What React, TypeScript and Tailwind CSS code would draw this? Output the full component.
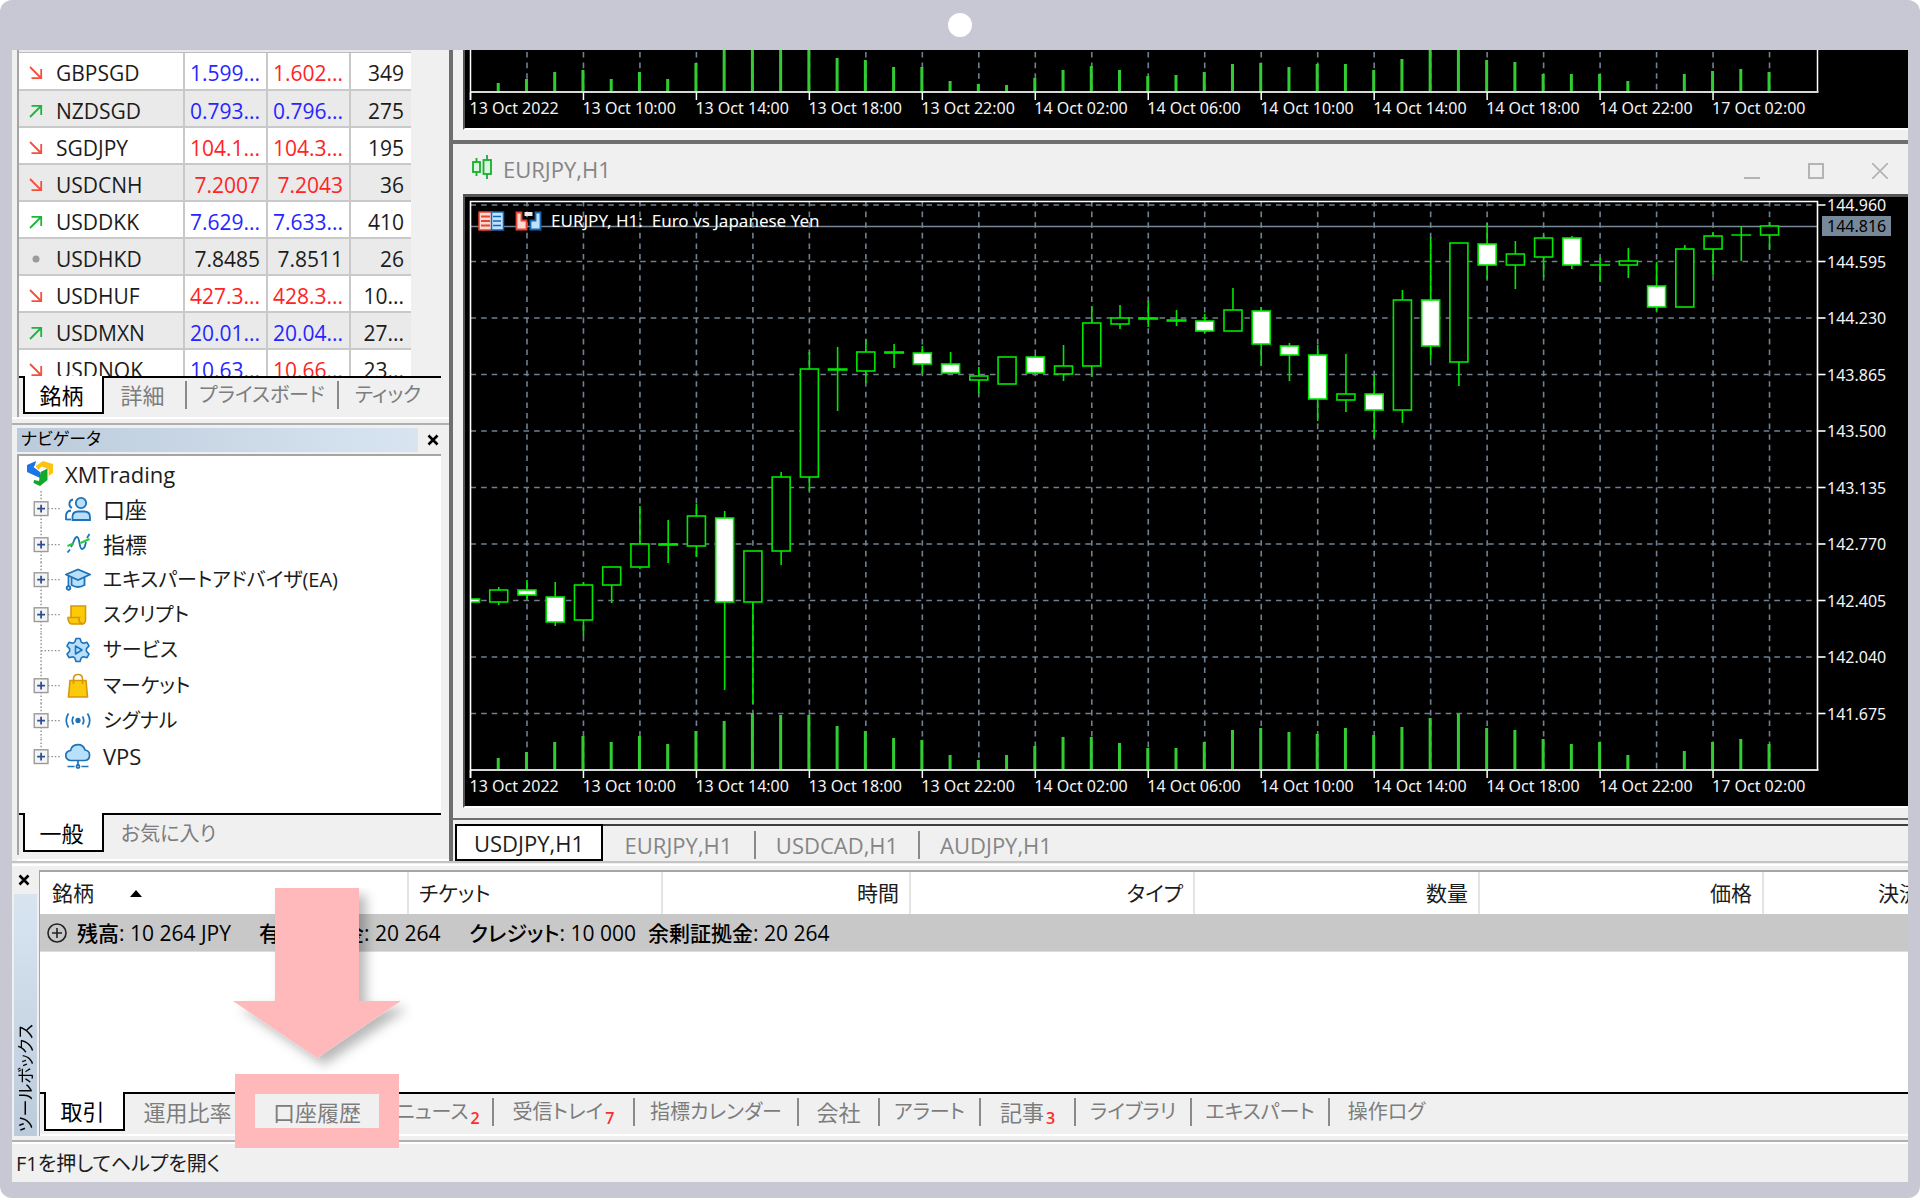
import React from 'react';

const FONT = "font-['Open_Sans','Noto_Sans_CJK_JP',sans-serif] [font-feature-settings:'palt']";

type Direction = 'up' | 'down' | 'flat';

interface Quote {
  symbol: string;
  direction: Direction;
  bid: string;
  ask: string;
  spread: string;
  bidColor: string;
  askColor: string;
}

const RED = 'text-[#ff2424]';
const BLUE = 'text-[#2626ff]';
const DARK = 'text-[#1c1c1c]';

const quotes: Quote[] = [
  { symbol: 'GBPSGD', direction: 'down', bid: '1.599...', ask: '1.602...', spread: '349', bidColor: BLUE, askColor: RED },
  { symbol: 'NZDSGD', direction: 'up', bid: '0.793...', ask: '0.796...', spread: '275', bidColor: BLUE, askColor: BLUE },
  { symbol: 'SGDJPY', direction: 'down', bid: '104.1...', ask: '104.3...', spread: '195', bidColor: RED, askColor: RED },
  { symbol: 'USDCNH', direction: 'down', bid: '7.2007', ask: '7.2043', spread: '36', bidColor: RED, askColor: RED },
  { symbol: 'USDDKK', direction: 'up', bid: '7.629...', ask: '7.633...', spread: '410', bidColor: BLUE, askColor: BLUE },
  { symbol: 'USDHKD', direction: 'flat', bid: '7.8485', ask: '7.8511', spread: '26', bidColor: DARK, askColor: DARK },
  { symbol: 'USDHUF', direction: 'down', bid: '427.3...', ask: '428.3...', spread: '10...', bidColor: RED, askColor: RED },
  { symbol: 'USDMXN', direction: 'up', bid: '20.01...', ask: '20.04...', spread: '27...', bidColor: BLUE, askColor: BLUE },
  { symbol: 'USDNOK', direction: 'down', bid: '10.63...', ask: '10.66...', spread: '23...', bidColor: BLUE, askColor: RED },
];

// [high, body top, body bottom, low, filled]
type Candle = [number, number, number, number, 0 | 1];

const candles: Candle[] = [
  [599, 599, 602, 602, 1], [587, 590, 602, 605, 0], [580, 590, 595, 600, 1], [582, 597, 622, 626, 1],
  [582, 585, 620, 636, 0], [567, 567, 585, 603, 0], [506, 544, 567, 569, 0], [520, 544, 545, 563, 0],
  [504, 516, 546, 557, 0], [511, 518, 602, 690, 1], [551, 551, 602, 704, 0], [472, 477, 551, 565, 0],
  [352, 369, 477, 491, 0], [347, 369, 370, 411, 0], [339, 352, 371, 383, 0], [344, 352, 353, 368, 0],
  [346, 353, 364, 374, 1], [352, 364, 373, 373, 1], [367, 376, 380, 393, 0], [357, 357, 384, 384, 0],
  [355, 357, 373, 373, 1], [345, 366, 374, 381, 0], [306, 323, 366, 377, 0], [305, 318, 324, 329, 0],
  [301, 318, 319, 327, 0], [310, 320, 321, 326, 0], [314, 321, 331, 333, 1], [288, 310, 331, 331, 0],
  [307, 311, 344, 366, 1], [343, 346, 355, 381, 1], [345, 355, 399, 421, 1], [354, 394, 400, 412, 0],
  [375, 394, 410, 438, 1], [290, 300, 410, 423, 0], [237, 300, 346, 360, 1], [243, 243, 362, 386, 0],
  [223, 244, 265, 279, 1], [241, 254, 265, 289, 0], [235, 238, 257, 277, 0], [236, 238, 265, 269, 1],
  [258, 265, 265, 282, 0], [248, 261, 265, 278, 0], [262, 286, 307, 311, 1], [245, 249, 307, 307, 0],
  [232, 236, 249, 275, 0], [226, 235, 235, 261, 0], [222, 226, 235, 250, 0],
];

const volumes = [
  0, 12, 18, 28, 34, 28, 34, 26, 39, 49, 57, 55, 55, 44, 39, 32, 30, 15, 10, 15, 24, 33, 33, 27, 22, 22, 28, 40, 42, 38,
  36, 42, 35, 43, 52, 56, 42, 40, 31, 26, 28, 15, 0, 19, 28, 31, 26,
];

const upperVolumes = [
  0, 9, 13, 20, 22, 13, 20, 13, 29, 42, 42, 42, 42, 34, 32, 25, 25, 11, 8, 7, 14, 22, 26, 22, 16, 17, 20, 28, 29, 25, 28,
  28, 22, 33, 42, 42, 32, 30, 18, 18, 18, 11, 0, 18, 21, 23, 20,
];

const times = [
  '13 Oct 2022', '13 Oct 10:00', '13 Oct 14:00', '13 Oct 18:00', '13 Oct 22:00', '14 Oct 02:00',
  '14 Oct 06:00', '14 Oct 10:00', '14 Oct 14:00', '14 Oct 18:00', '14 Oct 22:00', '17 Oct 02:00',
];

const prices = [
  '144.960', '144.595', '144.230', '143.865', '143.500', '143.135', '142.770', '142.405', '142.040', '141.675',
];

const LEFT = 470.5;
const RIGHT = 1817.5;
const candleX = (i: number) => LEFT + i * 28.24;
const priceY = (i: number) => 205 + i * 56.5;

interface TimeAxisProps {
  baseline: number;
  bars: number[];
}

function TimeAxis({ baseline, bars }: TimeAxisProps) {
  return (
    <g>
      {bars.map((h, i) => (
        <rect key={i} x={candleX(i) - 2} y={baseline - h} width={3} height={h} fill="#32cd32" />
      ))}
      <path d={`M${LEFT} ${baseline}H${RIGHT + 1}`} stroke="#d8d8d8" strokeWidth={2} />
      {times.map((time, i) => (
        <g key={time}>
          <path d={`M${candleX(i * 4)} ${baseline}v8`} stroke="#fff" strokeWidth={1.5} />
          <text x={candleX(i * 4) - 1} y={baseline + 22} fill="#f4f4f4" fontSize={16}>
            {time}
          </text>
        </g>
      ))}
    </g>
  );
}

function GridColumns({ top, bottom }: { top: number; bottom: number }) {
  return (
    <g stroke="#708090" strokeWidth={1.6} strokeDasharray="5.6 5">
      {Array.from({ length: 23 }, (_, i) => (
        <path key={i} d={`M${candleX(i * 2 + 2)} ${top}V${bottom}`} />
      ))}
    </g>
  );
}

function UpperChart() {
  return (
    <svg viewBox="465 50 1443 78" className="block w-full bg-black font-['Noto_Sans',sans-serif]">
      <GridColumns top={52} bottom={92} />
      <path d={`M${LEFT} 50V100M${RIGHT} 50V92`} stroke="#fff" strokeWidth={1.5} />
      <TimeAxis baseline={92} bars={upperVolumes} />
    </svg>
  );
}

function MainChart() {
  return (
    <svg viewBox="465 197 1443 609" className="block w-full bg-black font-['Noto_Sans',sans-serif]">
      <GridColumns top={201} bottom={770} />
      <g stroke="#708090" strokeWidth={1.6} strokeDasharray="5.6 5">
        {prices.map((price, i) => (
          <path key={price} d={`M${LEFT} ${priceY(i)}H${RIGHT}`} />
        ))}
      </g>
      <path d={`M${LEFT} 226.5H${RIGHT}`} stroke="#778899" strokeWidth={1.6} />
      <TimeAxis baseline={770} bars={volumes} />
      <clipPath id="plot">
        <rect x={LEFT} y={200} width={RIGHT - LEFT} height={570} />
      </clipPath>
      <g clipPath="url(#plot)" stroke="#00e800" strokeWidth={1.6}>
        {candles.map(([high, top, bottom, low, filled], i) => (
          <g key={i}>
            <path d={`M${candleX(i)} ${high}V${top}M${candleX(i)} ${bottom}V${low}`} />
            {bottom - top < 2 ? (
              <path d={`M${candleX(i) - 10} ${(top + bottom) / 2}h20`} strokeWidth={bottom - top + 1.6} />
            ) : (
              <rect x={candleX(i) - 9} y={top} width={18} height={bottom - top} fill={filled ? '#fff' : '#000'} />
            )}
          </g>
        ))}
      </g>
      <path d={`M${LEFT} 778V201.5H${RIGHT}V770`} stroke="#fff" strokeWidth={1.6} fill="none" />
      {prices.map((price, i) => (
        <g key={price}>
          <path d={`M${RIGHT} ${priceY(i)}h8`} stroke="#fff" strokeWidth={1.6} />
          <text x={1827} y={priceY(i) + 6} fill="#f4f4f4" fontSize={16}>
            {price}
          </text>
        </g>
      ))}
      <rect x={1822} y={216} width={69} height={20} fill="#778899" />
      <text x={1827} y={232} fill="#000" fontSize={16}>
        144.816
      </text>

      {/* one-click trading and depth of market shortcuts */}
      <g>
        <rect x={479} y={212} width={13} height={18} fill="#ffd9d4" stroke="#e8442f" strokeWidth={1.5} />
        <path d="M481 216.500h9M481 221h9M481 225.500h9" stroke="#e8442f" strokeWidth={2} />
        <rect x={491.500} y={212} width={12} height={18} fill="#bfe3ff" stroke="#1766ae" strokeWidth={1.5} />
        <path d="M493 216.500h8M493 221h8M493 225.500h8" stroke="#1766ae" strokeWidth={1.6} />
        <path d="M516.500 212.500h5v8h5v9h-10z" fill="#ffd9d4" stroke="#e8442f" strokeWidth={1.8} />
        <path d="M540.500 212.500h-5v8h-5v9h10z" fill="#bfe3ff" stroke="#1766ae" strokeWidth={1.8} />
        <rect x={524.500} y={212} width={8} height={4} fill="#e8e8e8" />
      </g>
      <text x={551} y={227} fill="#fff" fontSize={17} className="whitespace-pre">
        {'EURJPY, H1:  Euro vs Japanese Yen'}
      </text>
    </svg>
  );
}

function DirectionIcon({ direction }: { direction: Direction }) {
  return (
    <svg viewBox="0 0 16 16" className="size-4" fill="none" strokeWidth={1.8}>
      {direction === 'down' && <path d="M2 2l11 11M3.500 13.200h9.700V4" stroke="#f4503c" />}
      {direction === 'up' && <path d="M2 14L13 3M3.500 2.800h9.700V12" stroke="#1db53a" />}
      {direction === 'flat' && <circle cx={8} cy={8} r={3.5} fill="#9b9b9b" />}
    </svg>
  );
}

function CloseIcon() {
  return (
    <svg viewBox="0 0 12 12" className="size-3" stroke="#000" strokeWidth={2.6}>
      <path d="M1.500 1.500l9 9M10.500 1.500l-9 9" />
    </svg>
  );
}

function MarketWatch() {
  return (
    <section className="border-b-2 border-white pl-[5px]">
      <div className="h-[326px] overflow-hidden border-l-2 border-[#a5a5a5]">
        <div className="h-[3px] w-[392px] border-b border-[#bdbdbd] bg-[#eaeaea]" />
        <table className="w-[392px] table-fixed border-collapse text-[21px] leading-7">
          <tbody>
            {quotes.map((quote) => (
              <tr key={quote.symbol} className="h-[37px] border-b-2 border-[#c9c9c9] bg-white even:bg-[#eaeaea] [&>td]:pt-1">
                <td className="w-[165px] border-r-2 border-[#c9c9c9] p-0 text-[#1c1c1c]">
                  <div className="flex items-center gap-3 pl-[9px]">
                    <DirectionIcon direction={quote.direction} />
                    {quote.symbol}
                  </div>
                </td>
                <td className={`w-[83px] border-r-2 border-[#c9c9c9] p-0 pr-1.5 text-right ${quote.bidColor}`}>{quote.bid}</td>
                <td className={`w-[83px] border-r-2 border-[#c9c9c9] p-0 pr-1.5 text-right ${quote.askColor}`}>{quote.ask}</td>
                <td className="p-0 pr-[7px] text-right text-[#1c1c1c]">{quote.spread}</td>
              </tr>
            ))}
          </tbody>
        </table>
      </div>
      <div className="mr-2 flex h-[41px] items-start border-l-2 border-[#a5a5a5] text-xl leading-7">
        <div className="h-0.5 w-1 shrink-0 bg-black" />
        <button className="h-[38px] w-[81px] shrink-0 border-x-2 border-b-2 border-black bg-white pt-0.5 pr-1 text-[22px] text-black">銘柄</button>
        <div className="flex h-full flex-1 items-start border-t-2 border-black pt-[3px] text-[#7d7d7d]">
          <button className="w-[81px] pr-1 text-[22px]">詳細</button>
          <button className="w-[152px] border-l-2 border-[#8a8a8a]">プライスボード</button>
          <button className="flex-1 border-l-2 border-[#8a8a8a] pr-1 whitespace-nowrap">ティック</button>
        </div>
      </div>
    </section>
  );
}

function AccountsIcon() {
  return (
    <svg viewBox="0 0 26 26" className="size-[26px]" fill="#b8e0fc" stroke="#1e72b8" strokeWidth={1.8}>
      <path d="M8 3.500a4.500 4.500 0 0 0-1 8.500M1 24v-4q0-5 5-5.500" fill="none" />
      <path d="M1 23.500h5" />
      <circle cx={16} cy={7} r={5.200} />
      <path d="M7.500 24v-3q0-5.500 5.500-5.500h6q6 0 6 5.500v3z" />
    </svg>
  );
}

function IndicatorsIcon() {
  return (
    <svg viewBox="0 0 26 26" className="size-[26px]" fill="none" strokeWidth={1.8}>
      <path d="M2.500 21.500l2.500-3M22 7l2.500-4" stroke="#1e72b8" />
      <path d="M6 16c3-4 3-10 6-10s2 12 5 12 3-3 4-7" stroke="#1e72b8" />
      <path d="M2.500 15l6-2.500M15.500 12l9-4" stroke="#28c840" strokeWidth={2} />
    </svg>
  );
}

function ExpertsIcon() {
  return (
    <svg viewBox="0 0 26 26" className="size-[26px]" fill="#b8e0fc" stroke="#1e72b8" strokeWidth={1.8}>
      <path d="M6.500 9v9q6.500 4 13 0V9z" />
      <path d="M1 7.500L13 2.500l12 5-12 5.500z" />
      <path d="M3.500 8.500v11" />
      <circle cx={3.500} cy={21} r={1.800} />
    </svg>
  );
}

function ScriptsIcon() {
  return (
    <svg viewBox="0 0 26 26" className="size-[26px]" fill="#fbcb0a" stroke="#d8960a" strokeWidth={1.6}>
      <path d="M6 15.500V4h14.500v14q0 4-4 4" />
      <path d="M3 15.500h11.500q-1.500 3 .5 5l3 1.500H6.500q-3.500-1-3.500-6.500z" />
    </svg>
  );
}

function ServicesIcon() {
  return (
    <svg viewBox="0 0 26 26" className="size-[26px]" fill="#b8e0fc" stroke="#1e72b8" strokeWidth={1.6} strokeLinejoin="round">
      <path d="M11 1.500h4l1.200 3.600 2 1.100 3.800-.8 2 3.500-2.600 2.900v2.400l2.600 2.900-2 3.500-3.800-.8-2 1.100L15 24.500h-4l-1.200-3.600-2-1.100-3.800.8-2-3.500 2.600-2.900v-2.400L2 8.900l2-3.500 3.800.8 2-1.100z" />
      <path d="M10.500 9v8l6.500-4z" />
    </svg>
  );
}

function MarketIcon() {
  return (
    <svg viewBox="0 0 26 26" className="size-[26px]" fill="#fbcb0a" stroke="#d8960a" strokeWidth={1.6}>
      <path d="M5 7.500h16l1.500 16.500h-19z" />
      <path d="M8.500 11V6q0-4.500 4.500-4.500T17.500 6v5" fill="none" />
    </svg>
  );
}

function SignalsIcon() {
  return (
    <svg viewBox="0 0 26 26" className="size-[26px]" fill="none" stroke="#1e72b8" strokeWidth={1.7}>
      <circle cx={13} cy={12.500} r={1.800} fill="#1e72b8" />
      <path d="M8.500 8.500q-2.500 4 0 8M17.500 8.500q2.500 4 0 8M3.500 5.500q-4.500 7 0 14M22.500 5.500q4.500 7 0 14" />
    </svg>
  );
}

function VpsIcon() {
  return (
    <svg viewBox="0 0 26 26" className="size-[26px]" fill="#b8e0fc" stroke="#1e72b8" strokeWidth={1.7}>
      <path d="M6 17.500a5 5 0 0 1-.5-10 7.500 7.500 0 0 1 14.500-.5 5.300 5.300 0 0 1 0 10.500z" />
      <path d="M13 17.500v5M2.500 23.500h7M16.500 23.500h7" />
      <circle cx={13} cy={23.500} r={1.600} />
    </svg>
  );
}

const treeItems = [
  { label: '口座', icon: <AccountsIcon />, expandable: true, size: 'text-[22px]' },
  { label: '指標', icon: <IndicatorsIcon />, expandable: true, size: 'text-[22px]' },
  { label: 'エキスパートアドバイザ(EA)', icon: <ExpertsIcon />, expandable: true, size: 'text-xl' },
  { label: 'スクリプト', icon: <ScriptsIcon />, expandable: true, size: 'text-xl' },
  { label: 'サービス', icon: <ServicesIcon />, expandable: false, size: 'text-xl' },
  { label: 'マーケット', icon: <MarketIcon />, expandable: true, size: 'text-xl' },
  { label: 'シグナル', icon: <SignalsIcon />, expandable: true, size: 'text-xl' },
  { label: 'VPS', icon: <VpsIcon />, expandable: true, size: 'text-[22px]' },
];

function TreeBranch({ expandable, last }: { expandable: boolean; last: boolean }) {
  return (
    <svg viewBox="0 0 30 36" className="h-full w-[30px]" fill="none" stroke="#8c8c8c" strokeWidth={1.4}>
      <path d={last ? 'M10 0V18' : 'M10 0V36'} strokeDasharray="1.500 2" />
      <path d="M10 18H29" strokeDasharray="1.500 2" />
      {expandable && (
        <g>
          <rect x={3} y={11} width={14} height={14} fill="#f4f4f4" stroke="#999" />
          <path d="M6 18h8M10 14v8" stroke="#2c4f94" strokeWidth={1.8} />
        </g>
      )}
    </svg>
  );
}

function Navigator() {
  return (
    <section className="mt-1 flex flex-1 flex-col border-t-2 border-[#b0b0b0] pt-[3px] pl-[5px]">
      <header className="flex h-6 items-center">
        <h2 className="h-full w-[401px] bg-gradient-to-r from-[#bccbdb] to-[#d8e5f1] pl-1 text-[17px] leading-[22px] text-black">ナビゲータ</h2>
        <button aria-label="閉じる" className="flex flex-1 justify-center pr-0.5">
          <CloseIcon />
        </button>
      </header>
      <div className="mt-0.5 mr-2 flex flex-1 flex-col border-t-2 border-l-2 border-[#a5a5a5] bg-white">
        <ul className="grid h-[318px] grid-rows-9 leading-7 text-[#1c1c1c]">
          <li className="flex items-center gap-3 pl-2 text-[22px]">
            <svg viewBox="0 0 26 26" className="size-[26px]">
              <path d="M0 4l9-4-1 4-1.500 2L13 11v6L0 11z" fill="#1d74e8" />
              <path d="M8.500 5L16 0l10 3v9l-4.500 3V8l-7-2.500-3 3.500z" fill="#fbc414" />
              <path d="M7 19l5 1 1.500-9 7-3.500V19L13 25l-6.500-3z" fill="#12a82c" />
            </svg>
            XMTrading
          </li>
          {treeItems.map((item, i) => (
            <li key={item.label} className={`flex items-center pl-3 ${item.size}`}>
              <TreeBranch expandable={item.expandable} last={i === treeItems.length - 1} />
              <span className="mr-3 ml-1">{item.icon}</span>
              {item.label}
            </li>
          ))}
        </ul>
      </div>
      <div className="mr-2 flex h-[42px] items-start border-l-2 border-[#a5a5a5] text-xl leading-7">
        <div className="h-0.5 w-1 shrink-0 bg-black" />
        <button className="h-[39px] w-[81px] shrink-0 border-x-2 border-b-2 border-black bg-white pt-0.5 pr-1 text-[22px] text-black">一般</button>
        <div className="flex h-full flex-1 items-start border-t-2 border-black pt-[5px] pl-[17px] text-[#7d7d7d]">
          <button>お気に入り</button>
        </div>
      </div>
      <div className="h-1.5 border-b-2 border-white" />
    </section>
  );
}

function ChartArea() {
  return (
    <main className="min-w-0 flex-1 border-l-4 border-[#6e6e6e]">
      <div className="ml-2.5 border-b-2 border-l-2 border-b-white border-l-[#555]">
        <UpperChart />
      </div>
      <div className="mt-2.5 h-1 bg-[#6e6e6e]" />
      <header className="flex h-[50px] items-center pr-5 pl-[18px] text-[#858585]">
        <svg viewBox="0 0 22 26" className="mb-1 h-[26px] w-[22px]" fill="#d9f7dd" stroke="#16b02c" strokeWidth={1.8}>
          <path d="M5.500 4v18M16 1v24" />
          <rect x={2} y={8} width={7} height={10} />
          <rect x={12.500} y={6} width={7.500} height={14} />
        </svg>
        <h1 className="flex-1 pl-[10px] text-[22px] leading-7">EURJPY,H1</h1>
        <div className="flex gap-12 pt-1">
          <button aria-label="最小化">
            <svg viewBox="0 0 16 16" className="size-4" stroke="#b4b4b4" strokeWidth={2}>
              <path d="M0 15h16" />
            </svg>
          </button>
          <button aria-label="最大化">
            <svg viewBox="0 0 16 16" className="size-4" fill="none" stroke="#b4b4b4" strokeWidth={2}>
              <rect x={1} y={1} width={14} height={14} />
            </svg>
          </button>
          <button aria-label="閉じる">
            <svg viewBox="0 0 16 16" className="size-4" stroke="#b4b4b4" strokeWidth={1.8}>
              <path d="M0 0l16 16M16 0L0 16" />
            </svg>
          </button>
        </div>
      </header>
      <div className="ml-2.5 border-t-[3px] border-b-2 border-l-2 border-t-[#555] border-b-white border-l-[#555]">
        <MainChart />
      </div>
      <div className="mt-2.5 h-0.5 bg-[#707070]" />
      <div className="mt-1 flex h-[37px] items-start pl-0.5 text-[22px] leading-7">
        <button className="h-full w-[148px] shrink-0 border-2 border-black bg-white text-[#1c1c1c]">USDJPY,H1</button>
        <div className="flex h-full flex-1 items-start border-t-2 border-[#3c3c3c] pt-[5px] text-[#858585]">
          <button className="w-[151px]">EURJPY,H1</button>
          <button className="w-[164px] border-l-2 border-[#8a8a8a]">USDCAD,H1</button>
          <button className="w-[154px] border-l-2 border-[#8a8a8a]">AUDJPY,H1</button>
        </div>
      </div>
    </main>
  );
}

const toolboxTabs = [
  { label: '運用比率', width: 'w-[125px]', size: 'text-[22px]' },
  { label: '口座履歴', width: 'w-[132px]', size: 'text-[22px]', highlighted: true },
  { label: 'ニュース', width: 'w-[110px]', size: 'text-xl', badge: 2 },
  { label: '受信トレイ', width: 'w-[141px]', size: 'text-xl', badge: 7 },
  { label: '指標カレンダー', width: 'w-[164px]', size: 'text-xl' },
  { label: '会社', width: 'w-[81px]', size: 'text-[22px]' },
  { label: 'アラート', width: 'w-[101px]', size: 'text-xl' },
  { label: '記事', width: 'w-[95px]', size: 'text-[22px]', badge: 3 },
  { label: 'ライブラリ', width: 'w-[116px]', size: 'text-xl' },
  { label: 'エキスパート', width: 'w-[138px]', size: 'text-xl' },
  { label: '操作ログ', width: 'w-[115px]', size: 'text-xl' },
];

function HistoryPointer() {
  return (
    <div className="pointer-events-none absolute -bottom-[22px] left-1/2 flex -translate-x-1/2 flex-col items-center">
      <svg viewBox="0 0 190 186" className="h-[186px] w-[190px]">
        <defs>
          <filter id="arrow-shadow" x="-10%" y="-10%" width="130%" height="130%">
            <feDropShadow dx={7} dy={7} stdDeviation={6} floodColor="#000" floodOpacity={0.28} />
          </filter>
        </defs>
        <path d="M53 0h84v113h42L95 170 11 113h42z" fill="#ffb9ba" filter="url(#arrow-shadow)" />
      </svg>
      <div className="h-[74px] w-[164px] border-20 border-[#ffb9ba]" />
    </div>
  );
}

function Toolbox() {
  return (
    <section className="flex flex-1 border-b-2 border-[#b0b0b0] pb-1">
      <div className="flex w-7 shrink-0 flex-col items-center border-r border-[#a5a5a5]">
        <button aria-label="閉じる" className="mb-1 flex h-5 items-center pr-1">
          <CloseIcon />
        </button>
        <h2 className="flex w-[23px] flex-1 rotate-180 items-center bg-gradient-to-b from-[#bccbdb] to-[#d8e5f1] pt-1 text-[17px] leading-6 text-black [text-orientation:sideways] [writing-mode:vertical-rl]">
          ツールボックス
        </h2>
      </div>
      <div className="flex min-w-0 flex-1 flex-col border-t-2 border-[#a5a5a5]">
        <div className="flex-1 bg-white">
          <table className="w-full table-fixed border-collapse overflow-hidden text-[21px] leading-7">
            <thead>
              <tr className="h-[42px] text-right text-[#1c1c1c] [&>th]:font-normal [&>th:not(:last-child)]:border-r-2 [&>th]:border-[#e4e4e4]">
                <th className="w-[368px] p-0 pl-3 text-left">
                  <span className="flex items-center gap-9">
                    銘柄
                    <svg viewBox="0 0 12 8" className="h-2 w-3">
                      <path d="M0 8L6 1l6 7z" />
                    </svg>
                  </span>
                </th>
                <th className="w-[254px] p-0 pl-2.5 text-left">チケット</th>
                <th className="w-[248px] p-0 pr-2.5">時間</th>
                <th className="w-[284px] p-0 pr-2.5">タイプ</th>
                <th className="w-[285px] p-0 pr-2.5">数量</th>
                <th className="w-[284px] p-0 pr-2.5">価格</th>
                <th className="overflow-hidden p-0 pl-[114px] text-left whitespace-nowrap">決済</th>
              </tr>
            </thead>
            <tbody>
              <tr className="h-[37px] border-b border-[#dcdcdc] bg-[#c8c8c8] font-medium text-black">
                <td colSpan={7} className="p-0 pt-0.5 text-[21px] leading-7">
                  <div className="flex items-center pl-[7px] whitespace-nowrap">
                    <svg viewBox="0 0 20 20" className="size-5" fill="none" stroke="#222" strokeWidth={1.6}>
                      <circle cx={10} cy={10} r={9} />
                      <path d="M5 10h10M10 5v10" />
                    </svg>
                    <span className="ml-2.5 w-[182px]">残高: 10 264 JPY</span>
                    <span className="w-[210px]">有効証拠金: 20 264</span>
                    <span className="w-[179px]">クレジット: 10 000</span>
                    <span>余剰証拠金: 20 264</span>
                  </div>
                </td>
              </tr>
            </tbody>
          </table>
        </div>
        <div className="flex h-11 items-start border-b-2 border-white text-xl leading-7">
          <div className="h-0.5 w-1 shrink-0 bg-black" />
          <button className="h-[39px] w-[81px] shrink-0 border-x-2 border-b-2 border-black bg-white pr-1 text-[22px] text-black">取引</button>
          <div className="flex flex-1 items-start border-t-2 border-black pt-1 text-[#7d7d7d]">
            {toolboxTabs.map((tab, i) => (
              <div
                key={tab.label}
                className={`relative shrink-0 ${tab.width} ${tab.highlighted ? 'z-10' : ''} ${i > 0 ? 'border-l-2 border-[#8a8a8a]' : ''}`}
              >
                <button className={`flex h-7 w-full items-center justify-center whitespace-nowrap ${tab.size}`}>
                  {tab.label}
                  {tab.badge && <sub className="bottom-0 ml-0.5 self-end text-base leading-4 font-semibold text-[#ff2a2a]">{tab.badge}</sub>}
                </button>
                {tab.highlighted && <HistoryPointer />}
              </div>
            ))}
          </div>
        </div>
      </div>
    </section>
  );
}

export default function App() {
  return (
    <div className={`min-h-screen bg-white pb-0.5 ${FONT}`}>
      <div className="flex min-h-[calc(100vh-2px)] flex-col overflow-hidden rounded-xl bg-[#c8c7d4] px-3 pb-4">
        <div className="flex h-[50px] items-center justify-center">
          <div className="size-6 rounded-full bg-white" />
        </div>
        <div className="flex flex-1 flex-col bg-[#f0f0f0]">
          <div className="flex">
            <aside className="flex w-[437px] shrink-0 flex-col">
              <MarketWatch />
              <Navigator />
            </aside>
            <ChartArea />
          </div>
          <div className="mb-1 h-[5px] border-t-2 border-b-2 border-t-[#c4c4c4] border-b-white" />
          <Toolbox />
          <footer className="h-10 border-t-2 border-white pt-0.5 pl-1 text-xl leading-9 text-[#1c1c1c]">F1を押してヘルプを開く</footer>
        </div>
      </div>
    </div>
  );
}
